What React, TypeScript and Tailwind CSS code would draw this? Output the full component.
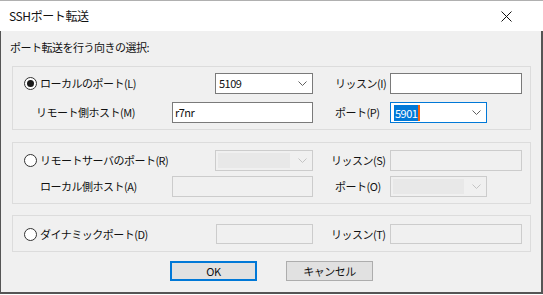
import React from "react";

const font = { fontFamily: '"Noto Sans CJK JP", "Noto Sans", sans-serif' };

function Radio({ checked, label }: { checked?: boolean; label: string }) {
  return (
    <div className="flex items-center">
      <span className="w-[13px] h-[13px] rounded-full border border-[#333333] bg-white flex items-center justify-center">
        {checked && <span className="w-[7px] h-[7px] rounded-full bg-[#1a1a1a]" />}
      </span>
      <span className="ml-[3px]">{label}</span>
    </div>
  );
}

function Chevron({ disabled }: { disabled?: boolean }) {
  return (
    <svg width="9" height="5" viewBox="0 0 9 5" className="shrink-0">
      <polyline
        points="0.5,0.5 4.5,4.5 8.5,0.5"
        fill="none"
        stroke={disabled ? "#c4c4c4" : "#606060"}
        strokeWidth="1"
      />
    </svg>
  );
}

function TextBox({ w, h = 21, value, disabled }: { w: number; h?: number; value?: string; disabled?: boolean }) {
  return (
    <div
      className={`border flex items-center pl-[2px] ${
        disabled ? "border-[#cccccc] bg-[#f0f0f0]" : "border-[#7a7a7a] bg-white"
      }`}
      style={{ width: w, height: h }}
    >
      {value}
    </div>
  );
}

function Combo({
  w,
  h = 21,
  value,
  disabled,
  focused,
}: {
  w: number;
  h?: number;
  value?: string;
  disabled?: boolean;
  focused?: boolean;
}) {
  return (
    <div
      className={`border flex items-center pr-[5px] ${
        disabled ? "border-[#cccccc] bg-[#f0f0f0]" : focused ? "border-[#0078d7] bg-white" : "border-[#7a7a7a] bg-white"
      }`}
      style={{ width: w, height: h }}
    >
      <div className="flex-1 h-full flex items-center pl-[3px]">
        {disabled ? (
          <div className="w-full h-[calc(100%-4px)] bg-[#e8e8e8] mr-[8px] -ml-[1px]" />
        ) : focused ? (
          <div className="flex items-center h-[16px]">
            <span className="bg-[#0078d7] text-white px-[1px] leading-[16px]">{value}</span>
            <span className="w-[2px] h-[16px] bg-[#f7630c]" />
          </div>
        ) : (
          <span>{value}</span>
        )}
      </div>
      <Chevron disabled={disabled} />
    </div>
  );
}

function GroupBox({ className, children }: { className: string; children: React.ReactNode }) {
  return (
    <div className={`ml-[11px] w-[519px] border border-[#dcdcdc] flex flex-col ${className}`}>{children}</div>
  );
}

export default function App() {
  return (
    <div className="w-[543px] h-[295px] bg-white text-[11px] tracking-[-0.5px] text-[#111111]" style={font}>
      <div className="w-[543px] h-[294px] flex flex-col">
        <div className="h-[31px] bg-white flex items-center justify-between pl-[9px] pr-[31px] border-t border-[#b0b0b0]">
          <span className="text-[12px] tracking-[-0.4px]">SSHポート転送</span>
          <svg width="11" height="11" viewBox="0 0 11 11">
            <path d="M0.5 0.5 L10.5 10.5 M10.5 0.5 L0.5 10.5" stroke="#111" strokeWidth="1" fill="none" />
          </svg>
        </div>
        <div className="flex-1 bg-[#f0f0f0] border-l border-r-2 border-b-2 border-[#555555] flex flex-col">
          <div className="pl-[9px] pt-[8px] h-[24px] leading-[16px]">ポート転送を行う向きの選択:</div>
          {/* group 1 */}
          <GroupBox className="mt-[11px] pt-[6px] pb-[6px] gap-[8px]">
            <div className="flex items-center h-[21px]">
              <div className="w-[202px] pl-[11px]">
                <Radio checked label="ローカルのポート(L)" />
              </div>
              <Combo w={98} value="5109" />
              <div className="w-[77px] pl-[22px]">リッスン(I)</div>
              <TextBox w={132} />
            </div>
            <div className="flex items-center h-[21px]">
              <div className="w-[159px] pl-[23px]">リモート側ホスト(M)</div>
              <TextBox w={141} value="r7nr" />
              <div className="w-[77px] pl-[22px]">ポート(P)</div>
              <Combo w={97} value="5901" focused />
            </div>
          </GroupBox>
          {/* group 2 */}
          <GroupBox className="mt-[12px] pt-[7px] pb-[6px] gap-[5px]">
            <div className="flex items-center h-[21px]">
              <div className="w-[202px] pl-[11px]">
                <Radio label="リモートサーバのポート(R)" />
              </div>
              <Combo w={98} disabled />
              <div className="w-[77px] pl-[18px]">リッスン(S)</div>
              <TextBox w={132} disabled />
            </div>
            <div className="flex items-center h-[21px]">
              <div className="w-[159px] pl-[27px]">ローカル側ホスト(A)</div>
              <TextBox w={141} disabled />
              <div className="w-[77px] pl-[22px]">ポート(O)</div>
              <Combo w={97} disabled />
            </div>
          </GroupBox>
          {/* group 3 */}
          <GroupBox className="mt-[11px] pt-[8px] pb-[7px]">
            <div className="flex items-center h-[20px]">
              <div className="w-[203px] pl-[11px]">
                <Radio label="ダイナミックポート(D)" />
              </div>
              <TextBox w={97} h={20} disabled />
              <div className="w-[77px] pl-[18px]">リッスン(T)</div>
              <TextBox w={132} h={20} disabled />
            </div>
          </GroupBox>
          <div className="flex mt-[9px] pl-[169px] gap-[29px]">
            <div className="w-[87px] h-[20px] border-2 border-[#0078d7] bg-[#e1e1e1] flex items-center justify-center">
              OK
            </div>
            <div className="w-[87px] h-[20px] border border-[#adadad] bg-[#e1e1e1] flex items-center justify-center">
              キャンセル
            </div>
          </div>
        </div>
      </div>
    </div>
  );
}
